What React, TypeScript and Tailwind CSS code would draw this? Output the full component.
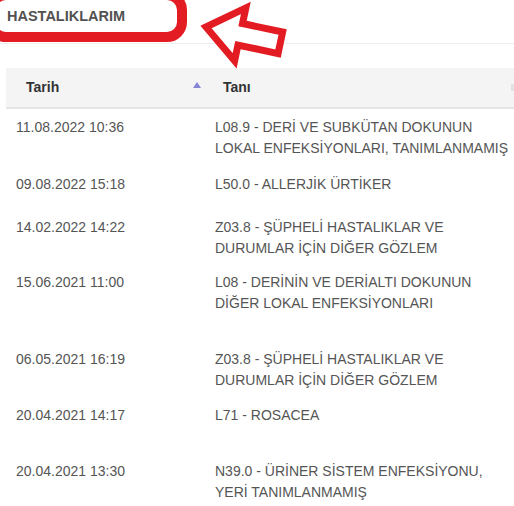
import React from "react";

type Row = { d: string; t: string[]; h: string };

const rows: Row[] = [
  { d: "11.08.2022 10:36", t: ["L08.9 - DERİ VE SUBKÜTAN DOKUNUN", "LOKAL ENFEKSİYONLARI, TANIMLANMAMIŞ"], h: "h-[57px]" },
  { d: "09.08.2022 15:18", t: ["L50.0 - ALLERJİK ÜRTİKER"], h: "h-[43px]" },
  { d: "14.02.2022 14:22", t: ["Z03.8 - ŞÜPHELİ HASTALIKLAR VE", "DURUMLAR İÇİN DİĞER GÖZLEM"], h: "h-[55px]" },
  { d: "15.06.2021 11:00", t: ["L08 - DERİNİN VE DERİALTI DOKUNUN", "DİĞER LOKAL ENFEKSİYONLARI"], h: "h-[77px]" },
  { d: "06.05.2021 16:19", t: ["Z03.8 - ŞÜPHELİ HASTALIKLAR VE", "DURUMLAR İÇİN DİĞER GÖZLEM"], h: "h-[56px]" },
  { d: "20.04.2021 14:17", t: ["L71 - ROSACEA"], h: "h-[56px]" },
  { d: "20.04.2021 13:30", t: ["N39.0 - ÜRİNER SİSTEM ENFEKSİYONU,", "YERİ TANIMLANMAMIŞ"], h: "h-[60px]" },
];

export default function App() {
  return (
    <div className="relative w-[514px] h-[506px] overflow-hidden bg-white font-['Liberation_Sans',Arial,sans-serif]">
      <div className="h-[44px] border-b border-[#ededed] pl-[7px] pt-[8px]">
        <h1 className="text-[14.5px] leading-[16px] font-bold text-[#525252]">HASTALIKLARIM</h1>
      </div>

      <div className="ml-[6px] mt-[24px]">
        <div className="flex h-[41px] bg-[#f4f4f4] border-b-2 border-[#e6e6e6]">
          <div className="w-[200px] flex items-center justify-between pl-[20px] pr-[5px]">
            <span className="text-[14px] font-bold text-[#333]">Tarih</span>
            <svg width="8" height="6" viewBox="0 0 8 6" className="mb-[6px]">
              <polygon points="4,0 8,6 0,6" fill="#8484d4" />
            </svg>
          </div>
          <div className="flex-1 flex items-center justify-between pl-[17px]">
            <span className="text-[14px] font-bold text-[#333]">Tanı</span>
            <div className="w-[3px] h-[7px] bg-[#e2e2e2]" />
          </div>
        </div>

        {rows.map((r, i) => (
          <div key={i} className={`flex pt-[8px] text-[14px] leading-[20.5px] text-[#555] ${r.h}`}>
            <div className="w-[200px] pl-[10px] whitespace-nowrap">{r.d}</div>
            <div className="pl-[9px] whitespace-nowrap">
              {r.t.map((line, j) => (
                <div key={j}>{line}</div>
              ))}
            </div>
          </div>
        ))}
      </div>

      {/* annotation: red rounded box around title */}
      <div className="absolute left-[-14px] top-[-10px] w-[201px] h-[52px] rounded-[20px] border-[10px] border-[#e31b23]" />

      {/* annotation: red outlined arrow */}
      <svg className="absolute left-[195px] top-0" width="100" height="72" viewBox="0 0 100 72">
        <g transform="translate(11 27) rotate(12)">
          <polygon
            points="0,0 35,-27 35,-11 76,-11 76,11 35,11 35,27"
            fill="#ffffff"
            stroke="#e31b23"
            strokeWidth="7"
            strokeLinejoin="miter"
          />
        </g>
      </svg>
    </div>
  );
}
